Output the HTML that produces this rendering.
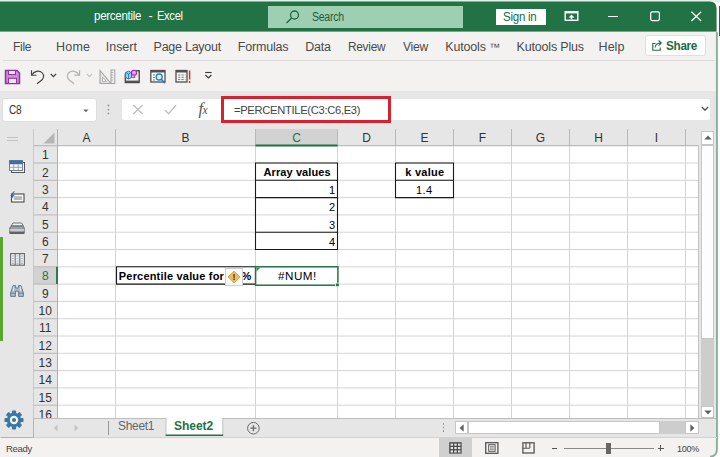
<!DOCTYPE html>
<html lang="en">
<head>
<meta charset="utf-8">
<title>percentile - Excel</title>
<style>
html,body{margin:0;padding:0;}
body{width:720px;height:457px;overflow:hidden;background:#fff;position:relative;font-family:"Liberation Sans",sans-serif;color:#444;}
.a{position:absolute;}
.t{position:absolute;white-space:nowrap;line-height:1;}
#title{left:0;top:2px;width:716px;height:29px;background:#217346;border-top-right-radius:9px;}
#ribbon{left:0;top:32px;width:717px;height:59px;background:#f3f2f1;}
#fbar{left:0;top:91px;width:717px;height:37px;background:#e6e6e6;}
#lpane{left:0;top:128px;width:33px;height:310px;background:#e6e6e6;}
#status{left:0;top:438px;width:717px;height:19px;background:#f3f2f1;border-bottom-right-radius:7px;}
.tab{color:#4a4a4a;}
.ch{position:absolute;font-size:12px;line-height:1;text-align:center;white-space:nowrap;}
.rh{position:absolute;left:0;width:24.5px;font-size:12px;line-height:1;text-align:center;white-space:nowrap;}
.cell{position:absolute;font-size:11.5px;line-height:17px;color:#000;white-space:nowrap;}
/*FIT*/
#t_pct{left:94.10px;top:10.00px;font-size:12.5px;letter-spacing:-0.300px;transform-origin:0 0;transform:scaleX(0.9215);}
#t_dash{left:148.40px;top:10.00px;font-size:12.5px;letter-spacing:0.000px;transform-origin:0 0;transform:scaleX(1.0000);}
#t_xl{left:157.02px;top:10.00px;font-size:12.5px;letter-spacing:-0.300px;transform-origin:0 0;transform:scaleX(0.8844);}
#srch{left:312.20px;top:11.00px;font-size:12.5px;letter-spacing:-0.300px;transform-origin:0 0;transform:scaleX(0.8413);}
#signin{left:503.00px;top:11.00px;font-size:12.5px;letter-spacing:-0.300px;transform-origin:0 0;transform:scaleX(0.9268);}
#tb1{left:13.24px;top:41.00px;font-size:12.5px;letter-spacing:-0.300px;transform-origin:0 0;transform:scaleX(0.9568);}
#tb2{left:56.00px;top:41.00px;font-size:12.5px;letter-spacing:0.203px;transform-origin:0 0;transform:scaleX(1.0000);}
#tb3{left:105.80px;top:41.00px;font-size:12.5px;letter-spacing:-0.038px;transform-origin:0 0;transform:scaleX(1.0000);}
#tb4{left:153.60px;top:41.00px;font-size:12.5px;letter-spacing:-0.262px;transform-origin:0 0;transform:scaleX(1.0000);}
#tb5{left:237.80px;top:41.00px;font-size:12.5px;letter-spacing:-0.192px;transform-origin:0 0;transform:scaleX(1.0000);}
#tb6{left:305.30px;top:41.00px;font-size:12.5px;letter-spacing:-0.284px;transform-origin:0 0;transform:scaleX(1.0000);}
#tb7{left:347.55px;top:41.00px;font-size:12.5px;letter-spacing:-0.300px;transform-origin:0 0;transform:scaleX(0.9504);}
#tb8{left:403.30px;top:41.00px;font-size:12.5px;letter-spacing:-0.300px;transform-origin:0 0;transform:scaleX(0.9688);}
#tb9{left:445.20px;top:41.00px;font-size:12.5px;letter-spacing:-0.146px;transform-origin:0 0;transform:scaleX(1.0000);}
#tb10{left:516.50px;top:41.00px;font-size:12.5px;letter-spacing:-0.176px;transform-origin:0 0;transform:scaleX(1.0000);}
#tb11{left:598.60px;top:41.00px;font-size:12.5px;letter-spacing:0.015px;transform-origin:0 0;transform:scaleX(1.0000);}
#share{left:666.30px;top:40.00px;font-size:12px;letter-spacing:-0.300px;transform-origin:0 0;transform:scaleX(0.9761);font-weight:bold;}
#nb{left:8.70px;top:104.00px;font-size:12px;letter-spacing:-0.300px;transform-origin:0 0;transform:scaleX(0.8460);}
#fml{left:233.75px;top:105.00px;font-size:11.5px;letter-spacing:-0.300px;transform-origin:0 0;transform:scaleX(0.9696);}
#c_av{left:263.50px;top:167.00px;font-size:11px;letter-spacing:0.098px;transform-origin:0 0;transform:scaleX(1.0000);font-weight:bold;}
#c_kv{left:405.30px;top:167.00px;font-size:11px;letter-spacing:0.236px;transform-origin:0 0;transform:scaleX(1.0000);font-weight:bold;}
#c_14{left:416.30px;top:185.00px;font-size:11px;letter-spacing:0.450px;transform-origin:0 0;transform:scaleX(1.0016);}
#c_pv{left:118.80px;top:271.00px;font-size:11px;letter-spacing:0.189px;transform-origin:0 0;transform:scaleX(1.0000);font-weight:bold;}
#c_pc{left:241.40px;top:271.00px;font-size:11px;letter-spacing:0.000px;transform-origin:0 0;transform:scaleX(1.0000);font-weight:bold;}
#c_num{left:277.60px;top:271.00px;font-size:11px;letter-spacing:0.450px;transform-origin:0 0;transform:scaleX(1.0620);}
#sh1{left:117.60px;top:420.00px;font-size:12px;letter-spacing:-0.300px;transform-origin:0 0;transform:scaleX(0.9984);}
#sh2{left:174.10px;top:420.00px;font-size:12px;letter-spacing:-0.056px;transform-origin:0 0;transform:scaleX(1.0000);font-weight:bold;}
#rdy{left:5.80px;top:444.00px;font-size:9.8px;letter-spacing:-0.300px;transform-origin:0 0;transform:scaleX(0.9699);}
#zm{left:676.50px;top:444.00px;font-size:9.5px;letter-spacing:-0.300px;transform-origin:0 0;transform:scaleX(0.9478);}
/*ENDFIT*/
</style>
</head>
<body>
<!-- window chrome backgrounds -->
<svg class="a" style="left:0;top:0" width="720" height="34" viewBox="0 0 720 34"><rect x="0" y="0" width="720" height="2" fill="#e4f1e8"/><path d="M0 1.5 H709.5 Q716.6 1.5 716.6 8.5 V31.8 H0 Z" fill="#217346"/><rect x="0" y="31.8" width="716.6" height="1" fill="#e9f5ee"/></svg>
<div class="a" id="ribbon"></div>
<div class="a" id="fbar"></div>
<div class="a" id="lpane"></div>
<div class="a" id="status"></div>
<!-- right window border -->
<svg class="a" style="left:700px;top:30px" width="20" height="427" viewBox="700 30 20 427"><path d="M716.9 32 V449 Q716.9 456.3 710 456.8" fill="none" stroke="#86b09a" stroke-width="1.9"/></svg>
<div class="a" style="left:718.5px;top:6px;width:2px;height:30px;background:#2f5f45;"></div>

<!-- TITLE BAR -->
<div class="t" id="t_pct" style="color:#fff;">percentile</div><div class="t" id="t_dash" style="color:#fff;">-</div><div class="t" id="t_xl" style="color:#fff;">Excel</div>
<div class="a" style="left:268px;top:6px;width:195px;height:22px;background:#9ecfb3;"></div>
<svg class="a" style="left:284px;top:9px" width="18" height="16" viewBox="0 0 18 16"><circle cx="10.5" cy="6" r="4" fill="none" stroke="#1e6b41" stroke-width="1.3"/><path d="M7.6 9 L2.5 14" stroke="#1e6b41" stroke-width="1.4" fill="none"/></svg>
<div class="t" id="srch" style="color:#1e5c3a;">Search</div>
<div class="a" style="left:496px;top:8.5px;width:49.5px;height:16.5px;background:#fff;"></div>
<div class="t" id="signin" style="color:#1e6b41;">Sign in</div>
<svg class="a" style="left:564px;top:10px" width="16" height="12" viewBox="0 0 16 12"><rect x="1.2" y="1.7" width="12.6" height="8.6" fill="none" stroke="#fff" stroke-width="1.4"/><rect x="1.2" y="1.2" width="12.6" height="2.2" fill="#fff"/><path d="M7.5 4.6 L4.6 7.5 H6.6 V9.4 H8.4 V7.5 H10.4 Z" fill="#fff"/></svg>
<div class="a" style="left:608px;top:15.5px;width:10px;height:1.4px;background:#fff;"></div>
<svg class="a" style="left:648px;top:9px" width="14" height="14" viewBox="648 9 14 14"><rect x="650.7" y="11.8" width="8.7" height="8.7" rx="1.4" fill="none" stroke="#fff" stroke-width="1.25"/></svg>
<svg class="a" style="left:690px;top:10px" width="14" height="14" viewBox="690 10 14 14"><path d="M691.4 11.8 L701.2 21 M701.2 11.8 L691.4 21" stroke="#fff" stroke-width="1.2" fill="none"/></svg>

<!-- RIBBON TABS -->
<div class="t tab" id="tb1" style="">File</div>
<div class="t tab" id="tb2" style="">Home</div>
<div class="t tab" id="tb3" style="">Insert</div>
<div class="t tab" id="tb4" style="">Page Layout</div>
<div class="t tab" id="tb5" style="">Formulas</div>
<div class="t tab" id="tb6" style="">Data</div>
<div class="t tab" id="tb7" style="">Review</div>
<div class="t tab" id="tb8" style="">View</div>
<div class="t tab" id="tb9" style="">Kutools <span style="font-size:11px;">™</span></div>
<div class="t tab" id="tb10" style="">Kutools Plus</div>
<div class="t tab" id="tb11" style="">Help</div>
<div class="a" style="left:645px;top:35px;width:61px;height:21px;background:#fff;border:1px solid #e1dfdd;border-radius:3px;box-sizing:border-box;"></div>
<svg class="a" style="left:651px;top:39px" width="13" height="13" viewBox="0 0 13 13"><path d="M4.5 4.5 H1.8 V11.2 H9.2 V8.5" fill="none" stroke="#1e6b41" stroke-width="1.1"/><path d="M4 8.5 C4.5 5.5 6.5 4 10 4 M7.6 1.5 L10.3 4 L7.6 6.6" fill="none" stroke="#1e6b41" stroke-width="1.1"/></svg>
<div class="t" id="share" style="color:#1e6b41;">Share</div>
<div class="a" style="left:3px;top:60px;width:712px;height:1px;background:#dcdad8;"></div>

<!-- QAT -->
<svg class="a" style="left:4px;top:69px" width="17" height="16" viewBox="0 0 17 16"><path d="M1.5 1.5 H13 L15.5 4 V14.5 H1.5 Z" fill="#cf8ad8" stroke="#8f35a0" stroke-width="1.5"/><rect x="4.5" y="1.5" width="7" height="4" fill="#f3e2f6" stroke="#8f35a0" stroke-width="1"/><rect x="4.5" y="9.3" width="8" height="5.2" fill="#f3e2f6" stroke="#8f35a0" stroke-width="1"/></svg>
<svg class="a" style="left:30px;top:69px" width="16" height="16" viewBox="0 0 16 16"><path d="M1.5 1.2 V6.2 H6.5" fill="none" stroke="#444" stroke-width="1.15"/><path d="M1.8 6 C4 2.2 9 1 12 3.6 C15 6.4 13.5 10 10.5 12 L7 14.8" fill="none" stroke="#444" stroke-width="1.15"/></svg>
<svg class="a" style="left:50px;top:73px" width="7" height="5" viewBox="0 0 7 5"><path d="M0.7 0.8 L3.4 3.6 L6.1 0.8" fill="none" stroke="#3b3a39" stroke-width="1.2"/></svg>
<svg class="a" style="left:65px;top:69px" width="16" height="16" viewBox="0 0 16 16"><path d="M14.5 1.2 V6.2 H9.5" fill="none" stroke="#b5b3b1" stroke-width="1.3"/><path d="M14.2 6 C12 2.2 7 1 4 3.6 C1 6.4 2.5 10 5.5 12 L9 14.8" fill="none" stroke="#b5b3b1" stroke-width="1.3"/></svg>
<svg class="a" style="left:85.5px;top:73px" width="7" height="5" viewBox="0 0 7 5"><path d="M0.7 0.8 L3.4 3.6 L6.1 0.8" fill="none" stroke="#c4c2c0" stroke-width="1.1"/></svg>
<svg class="a" style="left:99px;top:69px" width="17" height="16" viewBox="0 0 17 16"><path d="M1 1.5 L12 14.5 H1 Z" fill="#e4e4e4" stroke="#a3a3a3" stroke-width="1.1"/><path d="M3.5 8 L7.5 12.5 H3.5 Z" fill="#f3f2f1" stroke="#a8a8a8" stroke-width="0.8"/><rect x="12" y="1" width="3.8" height="13.5" fill="#ececec" stroke="#a3a3a3" stroke-width="1"/><path d="M12 3.5 H14 M12 6 H14 M12 8.5 H14 M12 11 H14" stroke="#a8a8a8" stroke-width="0.8"/></svg>
<svg class="a" style="left:124px;top:69px" width="17" height="16" viewBox="0 0 17 16"><path d="M1.3 5 V13.5 H15.2 V1.8 H12" fill="none" stroke="#505050" stroke-width="1.4"/><rect x="1.3" y="11.6" width="13.9" height="2.2" fill="#505050"/><path d="M1.5 3.5 L4.5 2.2 L7.5 3.5 V8.5 L4.5 10 L1.5 8.5 Z" fill="#9fd0f0" stroke="#1f7ec2" stroke-width="1"/><path d="M4.5 5 V10 M1.5 3.5 L4.5 5 L7.5 3.5" fill="none" stroke="#1f7ec2" stroke-width="0.9"/><circle cx="10" cy="3.8" r="2.6" fill="#e9a6ee" stroke="#b020c0" stroke-width="1.1"/><path d="M7.5 8.5 L11 8.5 L9.5 5.5" fill="#e9a6ee" stroke="#b020c0" stroke-width="0.8"/></svg>
<svg class="a" style="left:150px;top:69px" width="17" height="16" viewBox="0 0 17 16"><rect x="0.8" y="1.5" width="14.2" height="11.5" fill="#f8f8f8" stroke="#505050" stroke-width="1.3"/><rect x="0.8" y="1.2" width="14.2" height="2.3" fill="#505050"/><path d="M3 6 H5 M3 8.5 H5 M3 11 H5" stroke="#7a7a7a" stroke-width="1"/><circle cx="9.2" cy="8" r="3" fill="#dff0fb" stroke="#1f7ec2" stroke-width="1.3"/><path d="M11.3 10.3 L14.8 14.3" stroke="#1f7ec2" stroke-width="1.6"/></svg>
<svg class="a" style="left:175px;top:69px" width="17" height="16" viewBox="0 0 17 16"><rect x="1" y="1.5" width="11" height="11.5" fill="#f8f8f8" stroke="#505050" stroke-width="1.3"/><rect x="1" y="1.2" width="11" height="2.3" fill="#505050"/><path d="M3 6 H10.5 M3 8.3 H10.5 M3 10.6 H10.5" stroke="#808080" stroke-width="1" stroke-dasharray="2.4 1"/><path d="M14.6 1.5 V10.5 M14.6 12 V14" stroke="#e03030" stroke-width="1.5"/></svg>
<svg class="a" style="left:204px;top:71px" width="9" height="9" viewBox="0 0 9 9"><path d="M1.2 1.5 H7.6" stroke="#3b3a39" stroke-width="1.1"/><path d="M1.4 4 L4.4 7 L7.4 4" fill="none" stroke="#3b3a39" stroke-width="1.2"/></svg>

<!-- FORMULA BAR -->
<div class="a" style="left:3px;top:99px;width:92.5px;height:21.5px;background:#fff;border-radius:2px;box-shadow:0 0 0 0.6px #d8d8d8;"></div>
<div class="t" id="nb" style="color:#333;">C8</div>
<svg class="a" style="left:83px;top:108.8px" width="6" height="4" viewBox="0 0 6 4"><path d="M0.3 0.4 H5.5 L2.9 3.2 Z" fill="#666"/></svg>
<svg class="a" style="left:106px;top:103px" width="5" height="13" viewBox="0 0 5 13"><circle cx="2.4" cy="2.5" r="0.95" fill="#9a9a9a"/><circle cx="2.4" cy="6.6" r="0.95" fill="#9a9a9a"/><circle cx="2.4" cy="10.4" r="0.95" fill="#9a9a9a"/></svg>
<div class="a" style="left:122px;top:99px;width:99px;height:21px;background:#fff;border-radius:2px 0 0 2px;"></div>
<svg class="a" style="left:132px;top:104px" width="12" height="11" viewBox="0 0 12 11"><path d="M1.2 1 L10.6 10 M10.6 1 L1.2 10" stroke="#bdbdbd" stroke-width="1.2" fill="none"/></svg>
<svg class="a" style="left:164px;top:104px" width="13" height="11" viewBox="0 0 13 11"><path d="M1 6.2 L4.6 9.6 L12 1.2" stroke="#bdbdbd" stroke-width="1.3" fill="none"/></svg>
<div class="t" id="fx" style="left:198.5px;top:100.5px;font-family:'Liberation Serif',serif;font-style:italic;font-size:16.5px;color:#555;letter-spacing:-0.5px;">f<span style="font-size:11.5px;">x</span></div>
<div class="a" style="left:224px;top:99px;width:486px;height:21px;background:#fff;border-radius:0 2px 2px 0;"></div>
<div class="a" style="left:221px;top:96px;width:170px;height:27px;border:3px solid #d7212e;box-sizing:border-box;"></div>
<div class="t" id="fml" style="color:#444;">=PERCENTILE(C3:C6,E3)</div>
<svg class="a" style="left:701px;top:105.5px" width="8" height="6" viewBox="0 0 8 6"><path d="M0.9 1 L4 4.2 L7.1 1" fill="none" stroke="#555" stroke-width="1.4"/></svg>

<!-- LEFT PANE (Kutools navigation) -->
<div class="a" style="left:7px;top:136.5px;width:11px;height:1px;background:#c2c2c2;box-shadow:0 3px 0 #c2c2c2;"></div>
<div class="a" style="left:0;top:237px;width:2.5px;height:104px;background:#58a630;"></div>


<svg class="a" style="left:9px;top:159.5px" width="16" height="13" viewBox="0 0 16 13"><rect x="2.5" y="2.5" width="13" height="10" fill="#f4f4f4" stroke="#555" stroke-width="1"/><rect x="0.5" y="0.5" width="13" height="10" fill="#fff" stroke="#6b7f99" stroke-width="1"/><rect x="0.5" y="0.5" width="13" height="3.8" fill="#3f6fa8"/><path d="M0.5 7.3 H13.5 M4.8 4.3 V10.5 M9.2 4.3 V10.5" stroke="#8a96a6" stroke-width="0.9"/></svg>
<svg class="a" style="left:9px;top:190.5px" width="16" height="12" viewBox="0 0 16 12"><rect x="2.5" y="3" width="12.5" height="8" fill="#fafafa" stroke="#4a4a4a" stroke-width="1.1"/><rect x="5" y="5.2" width="8" height="3.8" fill="#b9b9b9"/><path d="M4.6 0.3 L1.2 5 H3.2 L1.6 9.2 L5.8 3.8 H3.6 L5.8 0.3 Z" fill="#2f72b8"/></svg>
<svg class="a" style="left:9px;top:221.5px" width="16" height="13" viewBox="0 0 16 13"><path d="M4 1 H12.5 L14.5 4 H2 Z" fill="#f2f2f2" stroke="#666" stroke-width="0.9"/><path d="M0.8 5.5 L3 4 H13.5 L15.2 5.5 V11.5 H0.8 Z" fill="#9aa0a8" stroke="#5a5f66" stroke-width="0.9"/><path d="M0.8 8 H15.2" stroke="#e8e8e8" stroke-width="1.2"/><path d="M1 10.8 H15" stroke="#555" stroke-width="1.2"/></svg>
<svg class="a" style="left:9.5px;top:252.5px" width="15" height="13" viewBox="0 0 15 13"><rect x="0.6" y="0.6" width="13.8" height="11.6" fill="#eef1f5" stroke="#666" stroke-width="1.1"/><path d="M5.2 0.6 V12.2 M9.8 0.6 V12.2" stroke="#666" stroke-width="1"/><path d="M2 3 H4 M2 5.5 H4 M2 8 H4 M2 10.3 H4 M6.5 3 H8.5 M6.5 5.5 H8.5 M6.5 8 H8.5 M6.5 10.3 H8.5 M11 3 H13 M11 5.5 H13 M11 8 H13 M11 10.3 H13" stroke="#b0b6bf" stroke-width="1.2"/></svg>
<svg class="a" style="left:9.5px;top:285px" width="14" height="12" viewBox="0 0 14 12"><path d="M3 0.6 H5.6 V3 H8.4 V0.6 H11 L13.4 8 V11.4 H8.6 V6.2 H5.4 V11.4 H0.6 V8 Z" fill="#a9bccd" stroke="#5d7186" stroke-width="0.9"/><path d="M1 8.2 H5.2 M8.8 8.2 H13" stroke="#5d7186" stroke-width="0.8"/><path d="M3.4 1.6 V6 M10.6 1.6 V6" stroke="#dfe8f0" stroke-width="1"/></svg>
<svg class="a" style="left:3.5px;top:409.5px" width="20" height="20" viewBox="-10 -10 20 20"><g fill="#3a76a6"><circle r="7.2"/><rect x="-2.1" y="-9.5" width="4.2" height="19" rx="0.9"/><rect x="-2.1" y="-9.5" width="4.2" height="19" rx="0.9" transform="rotate(45)"/><rect x="-2.1" y="-9.5" width="4.2" height="19" rx="0.9" transform="rotate(90)"/><rect x="-2.1" y="-9.5" width="4.2" height="19" rx="0.9" transform="rotate(135)"/></g><circle r="4.2" fill="#f4f7fa"/><circle r="2.1" fill="#3a76a6"/></svg>

<!-- GRID -->
<div class="a" id="grid" style="left:33px;top:128px;width:666px;height:290px;background:#fff;overflow:hidden;">
<!--GS-->
<div class="a" style="left:0;top:0;width:666px;height:18px;background:#e6e6e6;"></div>
<div class="a" style="left:0;top:0;width:24.5px;height:290px;background:#e6e6e6;"></div>
<div class="a" style="left:222.5px;top:1px;width:82px;height:17px;background:#d2d2d2;"></div>
<div class="a" style="left:0;top:139.3px;width:24.5px;height:17px;background:#d2d2d2;"></div>
<svg class="a" style="left:0;top:0" width="666" height="290" viewBox="33 128 666 290">
<path d="M115.50 146 V418" stroke="#d4d4d4" stroke-width="1"/>
<path d="M255.50 146 V418" stroke="#d4d4d4" stroke-width="1"/>
<path d="M337.50 146 V418" stroke="#d4d4d4" stroke-width="1"/>
<path d="M395.50 146 V418" stroke="#d4d4d4" stroke-width="1"/>
<path d="M453.50 146 V418" stroke="#d4d4d4" stroke-width="1"/>
<path d="M511.50 146 V418" stroke="#d4d4d4" stroke-width="1"/>
<path d="M569.50 146 V418" stroke="#d4d4d4" stroke-width="1"/>
<path d="M627.50 146 V418" stroke="#d4d4d4" stroke-width="1"/>
<path d="M685.50 146 V418" stroke="#d4d4d4" stroke-width="1"/>
<path d="M57.5 163.00 H699" stroke="#d4d4d4" stroke-width="1"/>
<path d="M57.5 180.30 H699" stroke="#d4d4d4" stroke-width="1"/>
<path d="M57.5 197.60 H699" stroke="#d4d4d4" stroke-width="1"/>
<path d="M57.5 214.90 H699" stroke="#d4d4d4" stroke-width="1"/>
<path d="M57.5 232.20 H699" stroke="#d4d4d4" stroke-width="1"/>
<path d="M57.5 249.50 H699" stroke="#d4d4d4" stroke-width="1"/>
<path d="M57.5 266.80 H699" stroke="#d4d4d4" stroke-width="1"/>
<path d="M57.5 284.10 H699" stroke="#d4d4d4" stroke-width="1"/>
<path d="M57.5 301.40 H699" stroke="#d4d4d4" stroke-width="1"/>
<path d="M57.5 318.70 H699" stroke="#d4d4d4" stroke-width="1"/>
<path d="M57.5 336.00 H699" stroke="#d4d4d4" stroke-width="1"/>
<path d="M57.5 353.30 H699" stroke="#d4d4d4" stroke-width="1"/>
<path d="M57.5 370.60 H699" stroke="#d4d4d4" stroke-width="1"/>
<path d="M57.5 387.90 H699" stroke="#d4d4d4" stroke-width="1"/>
<path d="M57.5 405.20 H699" stroke="#d4d4d4" stroke-width="1"/>
<path d="M57.5 422.50 H699" stroke="#d4d4d4" stroke-width="1"/>
<path d="M115.50 129 V146" stroke="#b8b8b8" stroke-width="1"/>
<path d="M255.50 129 V146" stroke="#b8b8b8" stroke-width="1"/>
<path d="M337.50 129 V146" stroke="#b8b8b8" stroke-width="1"/>
<path d="M395.50 129 V146" stroke="#b8b8b8" stroke-width="1"/>
<path d="M453.50 129 V146" stroke="#b8b8b8" stroke-width="1"/>
<path d="M511.50 129 V146" stroke="#b8b8b8" stroke-width="1"/>
<path d="M569.50 129 V146" stroke="#b8b8b8" stroke-width="1"/>
<path d="M627.50 129 V146" stroke="#b8b8b8" stroke-width="1"/>
<path d="M685.50 129 V146" stroke="#b8b8b8" stroke-width="1"/>
<path d="M33 163.00 H57.5" stroke="#b8b8b8" stroke-width="1"/>
<path d="M33 180.30 H57.5" stroke="#b8b8b8" stroke-width="1"/>
<path d="M33 197.60 H57.5" stroke="#b8b8b8" stroke-width="1"/>
<path d="M33 214.90 H57.5" stroke="#b8b8b8" stroke-width="1"/>
<path d="M33 232.20 H57.5" stroke="#b8b8b8" stroke-width="1"/>
<path d="M33 249.50 H57.5" stroke="#b8b8b8" stroke-width="1"/>
<path d="M33 266.80 H57.5" stroke="#b8b8b8" stroke-width="1"/>
<path d="M33 284.10 H57.5" stroke="#b8b8b8" stroke-width="1"/>
<path d="M33 301.40 H57.5" stroke="#b8b8b8" stroke-width="1"/>
<path d="M33 318.70 H57.5" stroke="#b8b8b8" stroke-width="1"/>
<path d="M33 336.00 H57.5" stroke="#b8b8b8" stroke-width="1"/>
<path d="M33 353.30 H57.5" stroke="#b8b8b8" stroke-width="1"/>
<path d="M33 370.60 H57.5" stroke="#b8b8b8" stroke-width="1"/>
<path d="M33 387.90 H57.5" stroke="#b8b8b8" stroke-width="1"/>
<path d="M33 405.20 H57.5" stroke="#b8b8b8" stroke-width="1"/>
<path d="M33 422.50 H57.5" stroke="#b8b8b8" stroke-width="1"/>
<path d="M33 145.70 H699" stroke="#b0b0b0" stroke-width="1"/>
<path d="M57.5 129 V418" stroke="#b0b0b0" stroke-width="1"/>
<path d="M33.5 129 V418" stroke="#c8c8c8" stroke-width="1"/>
<path d="M698.6 146 V418" stroke="#bdbdbd" stroke-width="1"/>
<path d="M54.5 132.5 V143.5 H43.5 Z" fill="#b5b5b5"/>
<path d="M255.5 145.5 H337.5" stroke="#217346" stroke-width="1.8"/>
<path d="M57 266.80 V284.10" stroke="#217346" stroke-width="1.8"/>
<path d="M255.50 163.00 H337.50 V249.50 H255.50 Z" fill="none" stroke="#1a1a1a" stroke-width="1.1"/>
<path d="M255.5 180.30 H337.5" stroke="#1a1a1a" stroke-width="1.1"/>
<path d="M255.5 197.60 H337.5" stroke="#1a1a1a" stroke-width="1.1"/>
<path d="M255.5 232.20 H337.5" stroke="#1a1a1a" stroke-width="1.1"/>
<path d="M395.50 163.00 H453.50 V197.60 H395.50 Z" fill="none" stroke="#1a1a1a" stroke-width="1.1"/>
<path d="M395.5 180.30 H453.5" stroke="#1a1a1a" stroke-width="1.1"/>
<path d="M116.50 266.80 H255.50 V284.10 H116.50 Z" fill="none" stroke="#1a1a1a" stroke-width="1.1"/>
<rect x="255.6" y="266.80" width="82.3" height="18.40" fill="#fff" stroke="#217346" stroke-width="1.5"/>
<rect x="335.6" y="283.10" width="3.6" height="3.6" fill="#217346" stroke="#fff" stroke-width="0.7"/>
<path d="M256.5 267.70 h3.8 l-3.8 3.8 Z" fill="#2e8b57"/>
</svg>
<div class="ch" style="left:24.5px;width:58.0px;top:4px;color:#333;">A</div>
<div class="ch" style="left:82.5px;width:140.0px;top:4px;color:#333;">B</div>
<div class="ch" style="left:222.5px;width:82.0px;top:4px;color:#217346;">C</div>
<div class="ch" style="left:304.5px;width:58.0px;top:4px;color:#333;">D</div>
<div class="ch" style="left:362.5px;width:58.0px;top:4px;color:#333;">E</div>
<div class="ch" style="left:420.5px;width:58.0px;top:4px;color:#333;">F</div>
<div class="ch" style="left:478.5px;width:58.0px;top:4px;color:#333;">G</div>
<div class="ch" style="left:536.5px;width:58.0px;top:4px;color:#333;">H</div>
<div class="ch" style="left:594.5px;width:58.0px;top:4px;color:#333;">I</div>
<div class="rh" style="top:21px;color:#333;">1</div>
<div class="rh" style="top:39px;color:#333;">2</div>
<div class="rh" style="top:56px;color:#333;">3</div>
<div class="rh" style="top:73px;color:#333;">4</div>
<div class="rh" style="top:91px;color:#333;">5</div>
<div class="rh" style="top:108px;color:#333;">6</div>
<div class="rh" style="top:125px;color:#333;">7</div>
<div class="rh" style="top:142px;color:#217346;">8</div>
<div class="rh" style="top:160px;color:#333;">9</div>
<div class="rh" style="top:177px;color:#333;">10</div>
<div class="rh" style="top:194px;color:#333;">11</div>
<div class="rh" style="top:212px;color:#333;">12</div>
<div class="rh" style="top:229px;color:#333;">13</div>
<div class="rh" style="top:246px;color:#333;">14</div>
<div class="rh" style="top:264px;color:#333;">15</div>
<div class="rh" style="top:281px;color:#333;">16</div>
<div class="a" style="left:-33px;top:-128px;width:0;height:0;"><div class="t" id="c_av" style="color:#000;">Array values</div>
<div class="t" id="c_kv" style="color:#000;">k value</div>
<div class="t" id="c_14" style="color:#000;">1.4</div>
<div class="t" id="c_pv" style="color:#000;">Percentile value for</div>
<div class="t" id="c_pc" style="color:#000;">%</div>
<div class="t" id="c_num" style="color:#000;">#NUM!</div>
<div class="t" style="color:#000;font-size:11px;left:328.9px;top:185px;">1</div>
<div class="t" style="color:#000;font-size:11px;left:328.9px;top:202px;">2</div>
<div class="t" style="color:#000;font-size:11px;left:328.9px;top:220px;">3</div>
<div class="t" style="color:#000;font-size:11px;left:328.9px;top:237px;">4</div></div>
<div class="a" style="left:192.0px;top:140.0px;width:18px;height:17.5px;background:#fbfbfb;border:1px solid #cfcfcf;box-sizing:border-box;"></div>
<svg class="a" style="left:194.0px;top:142.0px" width="14" height="14" viewBox="0 0 14 14"><path d="M7 1 L13 7 L7 13 L1 7 Z" fill="#f4b860" stroke="#e09a3a" stroke-width="0.8"/><text x="7" y="10" font-family="Liberation Sans, sans-serif" font-size="8.5" font-weight="bold" fill="#333" text-anchor="middle">!</text></svg>
<!--GE-->
</div>

<!-- VERTICAL SCROLLBAR -->
<div class="a" style="left:699px;top:128px;width:17px;height:290px;background:#e6e6e6;"></div>
<div class="a" style="left:701px;top:145px;width:13px;height:261px;background:#cdcdcd;"></div>
<div class="a" style="left:701px;top:131px;width:13px;height:13.5px;background:#fff;border:1px solid #c6c6c6;box-sizing:border-box;"></div>
<svg class="a" style="left:703.5px;top:135px" width="8" height="5" viewBox="0 0 8 5"><path d="M0.3 4.6 L4 0.6 L7.7 4.6 Z" fill="#606060"/></svg>
<div class="a" style="left:701px;top:145px;width:13px;height:194px;background:#fff;border:1px solid #c6c6c6;box-sizing:border-box;"></div>
<div class="a" style="left:701px;top:406px;width:13px;height:11.5px;background:#fff;border:1px solid #c6c6c6;box-sizing:border-box;"></div>
<svg class="a" style="left:703.5px;top:409.5px" width="8" height="5" viewBox="0 0 8 5"><path d="M0.3 0.4 L4 4.4 L7.7 0.4 Z" fill="#606060"/></svg>

<!-- SHEET TAB BAR -->
<div class="a" style="left:33px;top:418px;width:683px;height:20px;background:#e6e6e6;"></div>
<div class="a" style="left:33px;top:417.5px;width:683px;height:1px;background:#bdbdbd;"></div>
<svg class="a" style="left:53px;top:424px" width="5" height="8" viewBox="0 0 5 8"><path d="M4.5 0.5 L0.8 4 L4.5 7.5 Z" fill="#c4c4c4"/></svg>
<svg class="a" style="left:74px;top:424px" width="5" height="8" viewBox="0 0 5 8"><path d="M0.5 0.5 L4.2 4 L0.5 7.5 Z" fill="#c4c4c4"/></svg>
<div class="a" style="left:107.5px;top:421px;width:1px;height:14px;background:#9a9a9a;"></div>
<div class="t" id="sh1" style="color:#666;">Sheet1</div>
<svg class="a" style="left:164px;top:417px" width="61" height="20" viewBox="164 417 61 20"><rect x="166" y="417.5" width="56.8" height="17.6" fill="#fff"/><path d="M166 418 V435 M222.8 418 V435" stroke="#c4c4c4" stroke-width="1"/><path d="M165.6 435.3 H223.2" stroke="#217346" stroke-width="1.5"/></svg>
<div class="t" id="sh2" style="color:#217346;">Sheet2</div>
<svg class="a" style="left:246px;top:421px" width="15" height="15" viewBox="0 0 15 15"><circle cx="7.4" cy="7.2" r="5.8" fill="none" stroke="#6a6a6a" stroke-width="1"/><path d="M4.4 7.2 H10.4 M7.4 4.2 V10.2" stroke="#6a6a6a" stroke-width="1.3"/></svg>
<!-- HSCROLL -->
<div class="a" style="left:442.5px;top:423px;width:1.6px;height:1.6px;background:#9a9a9a;box-shadow:0 3.5px 0 #9a9a9a,0 7px 0 #9a9a9a;"></div>
<div class="a" style="left:454.5px;top:421px;width:244px;height:13.2px;background:#cdcdcd;"></div>
<div class="a" style="left:454.5px;top:421px;width:13.5px;height:13.2px;background:#fff;border:1px solid #c6c6c6;box-sizing:border-box;"></div>
<svg class="a" style="left:458.5px;top:423.5px" width="5" height="8" viewBox="0 0 5 8"><path d="M4.6 0.3 L0.6 4 L4.6 7.7 Z" fill="#606060"/></svg>
<div class="a" style="left:468px;top:421px;width:192px;height:13.2px;background:#fff;border:1px solid #c6c6c6;box-sizing:border-box;"></div>
<div class="a" style="left:685px;top:421px;width:13.5px;height:13.2px;background:#fff;border:1px solid #c6c6c6;box-sizing:border-box;"></div>
<svg class="a" style="left:689.5px;top:423.5px" width="5" height="8" viewBox="0 0 5 8"><path d="M0.4 0.3 L4.4 4 L0.4 7.7 Z" fill="#606060"/></svg>

<!-- STATUS BAR -->
<div class="a" style="left:0;top:437px;width:717px;height:1px;background:#d2d2d2;"></div>
<div class="a" style="left:1px;top:437px;width:33px;height:1px;background:#b4b4b4;"></div>
<div class="a" style="left:33px;top:418px;width:1px;height:20px;background:#b4b4b4;"></div>
<div class="t" id="rdy" style="color:#444;">Ready</div>
<div class="a" style="left:438.5px;top:438px;width:33.5px;height:19px;background:#d0d0d0;"></div>
<svg class="a" style="left:448.8px;top:442px" width="13" height="12" viewBox="0 0 13 12"><rect x="0.2" y="0.2" width="12.4" height="11.4" fill="#4a4a4a"/><g fill="#e8e8e8"><rect x="1.6" y="1.6" width="2.4" height="2.1"/><rect x="5.3" y="1.6" width="2.4" height="2.1"/><rect x="9" y="1.6" width="2.4" height="2.1"/><rect x="1.6" y="5" width="2.4" height="2.1"/><rect x="5.3" y="5" width="2.4" height="2.1"/><rect x="9" y="5" width="2.4" height="2.1"/><rect x="1.6" y="8.4" width="2.4" height="2.1"/><rect x="5.3" y="8.4" width="2.4" height="2.1"/><rect x="9" y="8.4" width="2.4" height="2.1"/></g></svg>
<svg class="a" style="left:485px;top:442px" width="14" height="12" viewBox="0 0 14 12"><rect x="0.7" y="0.7" width="12.2" height="10.6" fill="none" stroke="#555" stroke-width="1.3"/><rect x="3.7" y="2.7" width="6.4" height="6.6" fill="none" stroke="#555" stroke-width="1"/><path d="M5 4.6 H8.8 M5 6 H8.8 M5 7.4 H8.8" stroke="#666" stroke-width="0.7"/></svg>
<svg class="a" style="left:521.5px;top:442px" width="14" height="12" viewBox="0 0 14 12"><rect x="0.9" y="0.8" width="11.2" height="10.2" fill="none" stroke="#555" stroke-width="1.3"/><path d="M4 0.8 V6 M7.8 0.8 V6 M0.9 6.2 H7.8" fill="none" stroke="#555" stroke-width="1.1"/></svg>
<div class="a" style="left:551.5px;top:447.5px;width:5.5px;height:1.2px;background:#555;"></div>
<div class="a" style="left:563.5px;top:447.8px;width:90px;height:1px;background:#8a8a8a;"></div>
<div class="a" style="left:606px;top:443px;width:4.5px;height:10.5px;background:#666;"></div>
<div class="a" style="left:657.5px;top:447.5px;width:6.5px;height:1.2px;background:#555;"></div>
<div class="a" style="left:660.2px;top:444.8px;width:1.2px;height:6.5px;background:#555;"></div>
<div class="t" id="zm" style="color:#444;">100%</div>

</body>
</html>
